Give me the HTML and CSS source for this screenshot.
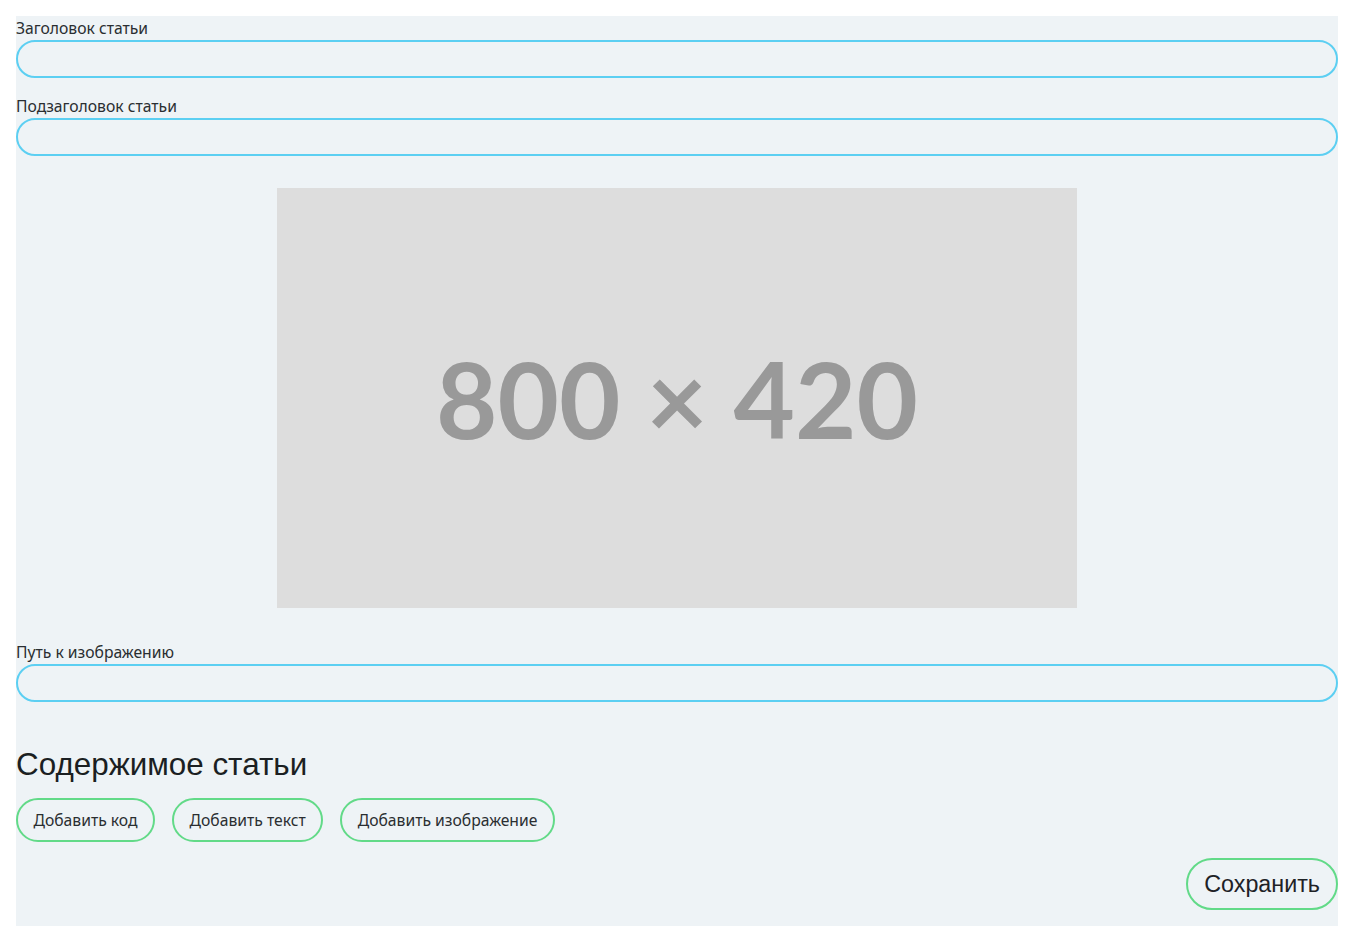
FILE: index.html
```html
<!DOCTYPE html>
<html lang="ru">
<head>
<meta charset="utf-8">
<title>Редактор статьи</title>
<link rel="stylesheet" href="styles.css">
</head>
<body>
<main class="editor">
  <div class="field">
    <label class="label" for="title">Заголовок статьи</label>
    <input class="input" id="title" type="text">
  </div>
  <div class="field">
    <label class="label" for="subtitle">Подзаголовок статьи</label>
    <input class="input" id="subtitle" type="text">
  </div>
  <div class="preview">
    <div class="placeholder">800 × 420</div>
  </div>
  <div class="field">
    <label class="label" for="path">Путь к изображению</label>
    <input class="input" id="path" type="text">
  </div>
  <h2 class="section-title">Содержимое статьи</h2>
  <div class="actions">
    <button class="btn" type="button">Добавить код</button>
    <button class="btn" type="button">Добавить текст</button>
    <button class="btn" type="button">Добавить изображение</button>
  </div>
  <div class="save-row">
    <button class="btn btn-save" type="button">Сохранить</button>
  </div>
</main>
</body>
</html>
```
FILE: styles.css
```css
html, body {
  margin: 0;
  padding: 0;
  background: #ffffff;
}
body {
  padding: 16px 16px 0 16px;
  font-family: "Noto Sans", "Open Sans", sans-serif;
  color: #1e2226;
}
.editor {
  background: #eef3f6;
  display: flex;
  flex-direction: column;
  padding-bottom: 16px;
  min-height: 894px;
  box-sizing: border-box;
}
.field {
  display: flex;
  flex-direction: column;
  margin-bottom: 16px;
}
.label {
  font-size: 15.7px;
  line-height: 24px;
  height: 24px;
  color: #2a2e31;
}
.input {
  box-sizing: border-box;
  height: 38px;
  border: 2px solid #5ccff2;
  border-radius: 19px;
  background: #eef3f6;
  padding: 0 16px;
  font: inherit;
  outline: none;
}
.preview {
  display: flex;
  justify-content: center;
  margin: 16px 0 32px;
}
.placeholder {
  width: 800px;
  height: 420px;
  background: #dddddd;
  color: #999999;
  font-family: Lato, "Liberation Sans", sans-serif;
  font-weight: bold;
  font-size: 106px;
  display: flex;
  align-items: center;
  justify-content: center;
}
.section-title {
  font-family: "Liberation Sans", Arial, sans-serif;
  font-weight: normal;
  font-size: 31.4px;
  line-height: 35px;
  margin: 29px 0 16px;
  color: #1b1f22;
}
.actions {
  display: flex;
  gap: 17px;
}
.btn {
  box-sizing: border-box;
  height: 44px;
  padding: 0 15.5px;
  border: 2px solid #62da88;
  border-radius: 22px;
  background: #eef3f6;
  font-family: "Noto Sans", "Open Sans", sans-serif;
  font-size: 15.7px;
  color: #2a2e31;
}
.save-row {
  display: flex;
  justify-content: flex-end;
  margin-top: 16px;
}
.btn-save {
  height: 52px;
  border-radius: 26px;
  font-family: "Liberation Sans", Arial, sans-serif;
  font-size: 23.3px;
  padding: 0 16px;
  color: #1e2226;
}
```
